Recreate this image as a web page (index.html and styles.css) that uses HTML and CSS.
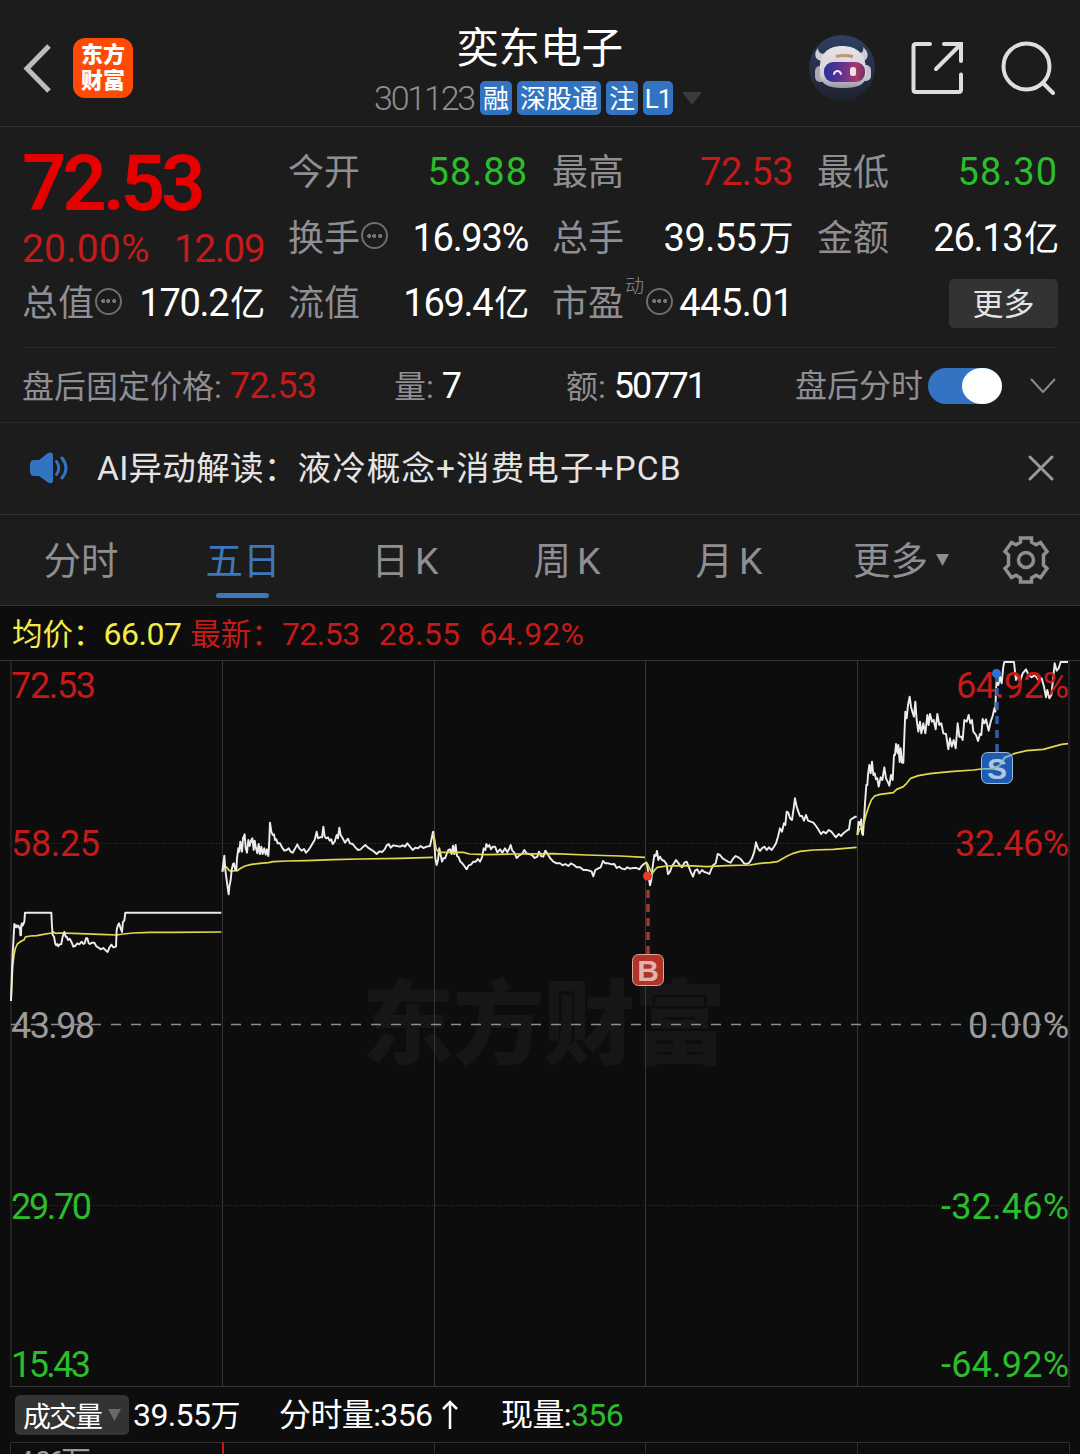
FILE: index.html
```html
<!DOCTYPE html>
<html lang="zh-CN">

<head>
	<meta charset="UTF-8">
	<meta name="viewport" content="width=device-width, initial-scale=1.0">
	<title>奕东电子 301123</title>
	<link rel="stylesheet" href="styles.css">
</head>

<body>
	<header class="topbar">
		<div class="left">
			<svg class="icon-back" width="32" height="50" viewBox="0 0 32 50">
				<path d="M28 3L6 25.5L28 48" />
			</svg>
			<div class="logo"><span>东方</span><span>财富</span></div>
		</div>
		<div class="title">
			<h1>奕东电子</h1>
			<div class="code">
				<span class="number">301123</span>
				<span class="tag">融</span>
				<span class="tag tag-wide">深股通</span>
				<span class="tag">注</span>
				<span class="tag tag-l1">L1</span>
				<svg width="20" height="13" viewBox="0 0 20 13"><path d="M0 0H20L10 13Z" fill="#3b3b3b" /></svg>
			</div>
		</div>
		<div class="actions">
			<svg width="66" height="66" viewBox="0 0 66 66">
				<defs>
					<linearGradient id="sky" x1="0" y1="0" x2="0" y2="1">
						<stop offset="0" stop-color="#303f61" />
						<stop offset="1" stop-color="#1d222e" />
					</linearGradient>
					<linearGradient id="visor" x1="0" y1="0" x2="1" y2="0">
						<stop offset="0" stop-color="#2a2f9a" />
						<stop offset=".45" stop-color="#63338f" />
						<stop offset=".8" stop-color="#a93a68" />
						<stop offset="1" stop-color="#6a2f6d" />
					</linearGradient>
					<linearGradient id="shell" x1="0" y1="0" x2="0" y2="1">
						<stop offset="0" stop-color="#e6e4e9" />
						<stop offset=".7" stop-color="#d3d0d8" />
						<stop offset="1" stop-color="#9996a3" />
					</linearGradient>
				</defs>
				<circle cx="33" cy="33" r="33" fill="url(#sky)" />
				<path d="M9 13C4 19 6 26 14 26L17 18C12 20 9 17 9 13Z" fill="#cfcdd4" />
				<path d="M54 12C61 18 60 25 52 27L48 18C53 19 55 16 54 12Z" fill="#cfcdd4" />
				<rect x="6" y="31" width="11" height="16" rx="5" fill="#aaa8b1" />
				<rect x="50" y="30" width="12" height="16" rx="5" fill="#c4c2ca" />
				<path d="M11 35C10 19 19 11 33 11C48 11 57 19 57 35C59 48 52 53 34 53C17 53 10 48 11 35Z" fill="url(#shell)" />
				<path d="M27 21.500Q35 19.500 44 21.500" stroke="#bd9673" stroke-width="3" fill="none" />
				<rect x="15" y="27" width="41" height="20" rx="9" fill="url(#visor)" />
				<path d="M25 39Q26 36 28.500 36Q31 36 32 39" stroke="#eceaff" stroke-width="2" fill="none" stroke-linecap="round" />
				<rect x="41" y="32" width="6" height="9" rx="2.500" fill="#f3dfec" />
			</svg>
			<svg class="icon-line" width="54" height="54" viewBox="0 0 54 54">
				<path d="M19 3H5Q2.500 3 2.500 5.500V48.500Q2.500 51 5 51H47.500Q50 51 50 48.500V33.500M33 3H50V20M49 4L25 28" />
			</svg>
			<svg class="icon-line" width="54" height="54" viewBox="0 0 54 54">
				<circle cx="25.500" cy="25.500" r="23" />
				<path d="M42 42L52 52" />
			</svg>
		</div>
	</header>

	<section class="quote">
		<div class="price">
			<div class="last">72.53</div>
			<div class="change"><span>20.00%</span><span class="tight">12.09</span></div>
		</div>
		<div class="cell"><label>今开</label><b class="green">58.88</b></div>
		<div class="cell"><label>最高</label><b class="red">72.53</b></div>
		<div class="cell"><label>最低</label><b class="green">58.30</b></div>
		<div class="cell"><label>换手</label><i class="more-dot"></i><b class="tight">16.93%</b></div>
		<div class="cell"><label>总手</label><b>39.55<em>万</em></b></div>
		<div class="cell"><label>金额</label><b class="tight">26.13<em>亿</em></b></div>
		<div class="cell"><label>总值</label><i class="more-dot"></i><b class="tight">170.2<em>亿</em></b></div>
		<div class="cell"><label>流值</label><b class="tight">169.4<em>亿</em></b></div>
		<div class="cell"><label>市盈<sup>动</sup></label><i class="more-dot"></i><b>445.01</b></div>
		<div class="cell"><button class="btn-more">更多</button></div>
	</section>

	<section class="after-hours">
		<div>盘后固定价格: <b class="red">72.53</b></div>
		<div>量: <b>7</b></div>
		<div>额: <b class="tight">50771</b></div>
		<div class="switch-group">
			<span>盘后分时</span>
			<span class="switch"></span>
			<svg width="26" height="16" viewBox="0 0 26 16"><path d="M1 1L13 14L25 1" fill="none" stroke="#8a8a8a" stroke-width="2" /></svg>
		</div>
	</section>

	<section class="news">
		<svg width="40" height="32" viewBox="0 0 40 32">
			<path d="M5 8H10L19 1Q24 -1 24 4V28Q24 33 19 30.500L10 24H5Q1 24 1 19V13Q1 8 5 8Z" fill="#3274c1" />
			<path d="M27.500 9.500Q32 16 27.500 22.500M33 6Q41 16 33 26" fill="none" stroke="#3274c1" stroke-width="3" stroke-linecap="round" />
		</svg>
		<p>AI异动解读：<span>液冷概念+消费电子+PCB</span></p>
		<svg width="26" height="26" viewBox="0 0 26 26"><path d="M2 2L24 24M24 2L2 24" stroke="#9a9a9a" stroke-width="3" stroke-linecap="round" /></svg>
	</section>

	<nav class="tabs">
		<a>分时</a>
		<a class="active">五日</a>
		<a>日<span>K</span></a>
		<a>周<span>K</span></a>
		<a>月<span>K</span></a>
		<a class="tab-more">更多<svg width="13" height="12" viewBox="0 0 13 12"><path d="M0 0H13L6.500 12Z" fill="#8e8e93" /></svg></a>
		<svg class="icon-gear" width="48" height="48" viewBox="0 0 48 48">
			<path d="M18.500 2H29.500V6L34 8.700L38.500 6.500L45 15.500L41.500 19V29L45 32.500L38.500 41.500L34 39.300L29.500 42V46H18.500V42L14 39.300L9.500 41.500L3 32.500L6.500 29V19L3 15.500L9.500 6.500L14 8.700L18.500 6Z" />
			<circle cx="24" cy="24" r="7.500" />
		</svg>
	</nav>

	<section class="legend">
		<span class="avg">均价：<b>66.07</b></span>
		<span class="latest">最新：<b>72.53</b><b>28.55</b><b>64.92%</b></span>
	</section>

	<svg class="chart" width="1080" height="728" viewBox="0 660 1080 728">
		<text class="watermark" x="362" y="1057" textLength="364">东方财富</text>

		<g class="grid">
			<path d="M0 660.500H1080M10 1386.500H1070M11 661V1386M222.500 661V1386M434.500 661V1386M645.500 661V1386M857.500 661V1386M1069 661V1386" />
			<path class="dotted" d="M12 843.500H1069M12 1205.500H1069" />
		</g>

		<!-- day 1, day 2 -->
		<g class="series" transform="translate(0 780) scale(.33333)">
			<polyline class="avg-line" points="33,663 36,600 38,560 42,525 46,505 52,492 60,486 66,482 72,480 76,471 90,468 110,467 130,463 155,459 160,456 166,460 180,459 220,460 300,463 350,465 370,462 400,459 450,457 520,457 664,456" />
			<polyline points="33,663 36,570 38,520 41,470 43,432 46,436 48,442 50,436 53,440 55,437 58,445 60,442 61,466 63,466 64,435 66,430 68,437 71,430 73,425 75,398 154,398 156,440 158,465 162,470 166,492 169,496 172,492 175,499 178,494 184,492 188,470 193,456 197,470 200,470 204,480 209,476 214,485 220,500 225,498 232,490 238,493 245,485 250,492 254,490 258,475 262,475 266,490 270,492 276,488 283,488 290,500 296,503 302,508 310,504 318,512 323,516 328,503 334,494 340,502 348,500 350,450 353,438 357,430 362,445 366,456 369,425 373,422 376,398 664,398" />
			<polyline class="avg-line" points="667,275 673,258 680,262 688,272 700,273 712,272 722,265 735,258 755,253 780,250 805,248 820,245 860,243 920,242 1000,239 1080,237 1200,235 1299,232" />
			<polyline points="667,275 670,250 673,227 676,270 680,300 684,330 686,343 688,320 692,300 695,270 699,252 702,250 706,270 709,270 711,235 715,205 718,215 721,185 724,200 726,215 729,175 734,163 737,205 741,218 745,180 749,198 753,182 757,175 761,210 764,182 768,205 772,220 776,192 780,222 784,200 788,222 793,205 797,224 801,208 805,228 807,200 810,128 814,155 818,165 822,163 825,180 829,178 833,190 840,190 846,202 853,212 860,210 866,205 872,215 878,218 884,208 892,193 898,205 905,212 912,207 918,218 924,212 932,200 938,190 944,180 950,155 954,175 960,172 966,172 970,140 974,170 979,175 984,172 989,182 994,178 998,192 1004,185 1010,165 1014,175 1018,143 1022,165 1028,175 1035,188 1044,176 1050,190 1058,192 1066,202 1074,210 1082,208 1090,200 1096,195 1104,203 1112,208 1120,213 1130,222 1138,214 1146,216 1154,208 1160,196 1166,192 1172,203 1180,196 1190,198 1200,200 1208,196 1215,200 1222,190 1230,200 1238,210 1246,203 1254,205 1262,198 1270,204 1280,200 1290,198 1294,180 1299,155" />
		</g>

		<!-- day 3, day 4 -->
		<g class="series" transform="translate(420 780) scale(.33333)">
			<polyline points="38,175 40,155 43,190 46,235 50,255 54,240 58,205 62,225 66,245 70,235 75,235 80,222 85,210 90,208 95,222 99,197 103,222 107,195 111,228 116,232 121,245 127,250 133,258 140,268 146,256 153,254 160,245 167,245 174,237 180,245 186,232 191,205 196,210 199,192 204,200 208,195 213,208 218,200 225,200 232,217 240,208 247,218 255,205 262,217 267,208 272,195 277,212 283,218 290,234 298,226 306,222 313,210 320,220 328,222 336,225 344,234 352,230 357,215 363,228 370,230 376,212 383,222 390,234 400,245 410,250 420,250 428,256 436,252 445,258 453,250 462,255 470,262 480,262 490,270 500,270 508,272 515,275 520,289 526,270 535,265 542,262 549,243 556,250 565,250 575,253 583,252 590,264 598,260 606,266 615,268 622,262 630,266 640,264 650,264 658,268 665,258 672,252 678,248" />
			<polyline class="avg-line" points="40,160 44,180 48,205 52,212 58,217 80,217 130,217 148,222 200,224 280,222 400,221 500,225 600,228 675,232" />
			<polyline points="680,248 683,265 686,290 690,316 694,300 698,260 703,225 707,228 711,213 715,240 720,230 726,240 733,243 740,253 744,282 750,275 756,258 762,250 768,240 774,248 780,256 786,262 793,248 800,245 806,260 812,275 819,290 825,272 832,268 838,280 846,270 853,276 860,278 868,282 875,265 880,255 887,250 893,222 900,225 908,235 916,240 924,245 932,248 940,235 947,228 955,232 963,238 972,250 980,252 988,248 996,235 1003,215 1008,187 1014,205 1020,213 1026,205 1033,200 1040,210 1047,202 1055,210 1062,200 1068,190 1074,170 1080,145 1086,155 1092,130 1096,135 1100,95 1105,98 1110,115 1116,120 1121,85 1125,55 1130,80 1135,95 1140,108 1146,108 1152,122 1158,105 1164,122 1172,125 1180,128 1188,138 1196,150 1203,162 1210,155 1218,160 1226,150 1234,155 1242,165 1248,172 1256,162 1263,168 1272,158 1280,152 1287,148 1291,120 1298,115 1306,110 1310,110" />
			<polyline class="avg-line" points="678,245 684,255 690,268 697,280 704,270 712,262 740,258 800,257 860,260 920,257 990,255 1020,250 1050,248 1072,245 1086,237 1102,228 1120,220 1140,214 1180,210 1240,208 1310,202" />
		</g>

		<!-- day 5 -->
		<g class="series" transform="translate(840 640) scale(.33333)">
			<polyline points="52,585 56,545 60,555 64,538 66,580 69,585 72,540 75,490 79,435 82,435 84,405 88,375 92,400 96,365 100,405 104,400 108,418 112,415 116,440 122,412 127,420 133,382 138,415 143,425 148,437 153,405 158,420 162,345 165,345 168,312 173,340 175,315 179,366 182,325 186,368 190,368 193,290 196,215 200,235 204,195 209,170 213,200 217,215 222,230 226,185 230,240 235,275 240,245 244,280 250,250 256,280 262,225 266,255 270,222 276,245 281,240 287,268 292,222 298,255 304,250 310,280 318,282 325,328 330,295 335,320 341,300 347,325 353,250 358,290 364,290 368,300 373,240 380,245 386,225 391,250 396,240 400,275 408,285 414,303 420,282 424,285 428,237 433,250 438,238 446,272 452,245 458,228 463,205 466,215 468,150 471,110 475,135 480,110 485,130 490,80 493,66 522,66 524,85 528,120 533,108 540,125 548,100 558,88 566,105 575,112 585,105 595,120 605,115 612,140 618,172 622,150 628,175 634,165 640,110 644,70 650,92 656,85 662,66 684,66" />
		</g>

		<g class="axis">
			<text class="up" x="11" y="698" textLength="85">72.53</text>
			<text class="up" x="11" y="856" textLength="89">58.25</text>
			<text class="flat" x="11" y="1038" textLength="84">43.98</text>
			<text class="down" x="11" y="1219" textLength="81">29.70</text>
			<text class="down" x="11" y="1377" textLength="80">15.43</text>
			<text class="up" x="956" y="698" textLength="113">64.92%</text>
			<text class="up" x="955" y="856" textLength="114">32.46%</text>
			<text class="flat" x="968" y="1038" textLength="101">0.00%</text>
			<text class="down" x="941" y="1219" textLength="128">-32.46%</text>
			<text class="down" x="941" y="1377" textLength="128">-64.92%</text>
		</g>
		<path class="zero" d="M11 1024.500H1069" />

		<g class="marker buy">
			<path d="M648 890V954" />
			<circle cx="647.500" cy="876" r="4.500" />
			<rect x="632.500" y="954.500" width="31" height="31" rx="6" />
			<text x="648" y="981">B</text>
		</g>
		<g class="marker sell">
			<path d="M997 674V752" />
			<circle cx="996.500" cy="673.500" r="4.500" />
			<rect x="981.500" y="752.500" width="31" height="31" rx="6" />
			<text x="997" y="779">S</text>
		</g>
		<g class="series" transform="translate(840 640) scale(.33333)">
			<polyline class="avg-line" points="52,585 58,570 64,560 72,550 78,525 86,500 94,480 104,468 120,463 160,458 170,448 190,440 200,430 212,415 235,407 270,401 330,395 400,390 424,387" />
			<polyline class="avg-line under-badge" points="424,387 460,386 480,375 495,352 510,347 518,343" />
			<polyline class="avg-line" points="518,343 525,340 560,332 610,328 640,320 665,313 684,311" />
		</g>
	</svg>

	<section class="volume-bar">
		<button class="indicator">成交量<svg width="13" height="12" viewBox="0 0 13 12"><path d="M0 0H13L6.500 12Z" fill="#6a6a6a" /></svg></button>
		<span class="total">39.55<em>万</em></span>
		<span class="minute">分时量:356<svg width="18" height="30" viewBox="0 0 18 30"><path d="M9 29V2M2 9L9 2L16 9" fill="none" stroke="#fff" stroke-width="2.500" /></svg></span>
		<span class="current">现量:<b class="green">356</b></span>
	</section>

	<svg class="volume-chart" width="1080" height="12" viewBox="0 0 1080 12">
		<path class="frame" d="M10.500 12V.5H1069.500V12M434.500 0V12M645.500 0V12M857.500 0V12" />
		<path class="bar" d="M223 0V12" />
		<text x="17" y="30" textLength="74">4.06万</text>
	</svg>
</body>

</html>
```
FILE: styles.css
```css
* {
	margin: 0;
	padding: 0;
	box-sizing: border-box;
}

body {
	width: 1080px;
	height: 1454px;
	overflow: hidden;
	background-color: #0d0d0d;
	color: #fff;
	font-family: Roboto, "Noto Sans CJK SC", sans-serif;
	line-height: 1;
}

svg {
	display: block;
	flex: none;
}

b,
i,
em {
	font-weight: 400;
	font-style: normal;
}

button {
	border: 0;
	font-family: inherit;
}

.red {
	color: #c41a1a;
}

.green {
	color: #2bbd2b;
}

/* header */

.topbar {
	display: grid;
	grid-template-columns: 270px 1fr 270px;
	height: 127px;
	background-color: #1c1c1c;
	border-bottom: 1px solid #343434;
}

.topbar .left {
	display: flex;
	align-items: center;
	gap: 18px;
	padding: 9px 0 0 21px;
}

.icon-back path {
	fill: none;
	stroke: #bdbdbd;
	stroke-width: 5;
}

.logo {
	display: flex;
	flex-direction: column;
	justify-content: center;
	width: 60px;
	height: 60px;
	margin-left: 2px;
	border-radius: 12px;
	background-color: #ff4a05;
	font-size: 22px;
	font-weight: 900;
	line-height: 26px;
	text-align: center;
}

.title {
	padding-top: 24px;
}

.title h1 {
	font-size: 41.5px;
	font-weight: 400;
	line-height: 50px;
	text-align: center;
}

.code {
	display: flex;
	align-items: center;
	gap: 5px;
	margin-top: 7px;
	padding-left: 104px;
	height: 34px;
}

.code .number {
	width: 101px;
	color: #8e8e93;
	font-size: 34px;
	font-weight: 300;
	letter-spacing: -2.2px;
}

.code svg {
	margin-left: 4px;
}

.tag {
	width: 32px;
	height: 34px;
	border-radius: 5px;
	background-color: #3274c1;
	font-size: 26px;
	line-height: 36px;
	text-align: center;
	white-space: nowrap;
}

.tag-wide {
	width: 84px;
}

.tag-l1 {
	width: 30px;
	letter-spacing: -1px;
}

.actions {
	display: flex;
	align-items: center;
	gap: 36px;
	padding-top: 9px;
}

.actions svg:first-child {
	margin-left: -1px;
}

.icon-line {
	fill: none;
	stroke: #dedede;
	stroke-width: 4;
	stroke-linecap: round;
}

/* quote numbers */

.quote {
	display: grid;
	grid-template-columns: 242px 240px 241px 241px;
	grid-template-rows: 66px 65px 66px;
	column-gap: 24px;
	height: 221px;
	padding: 12px 22px;
	background-color: #1c1c1c;
}

.price {
	grid-row: span 2;
}

.price .last {
	height: 85px;
	color: #e60000;
	font-size: 78px;
	font-weight: 600;
	line-height: 90px;
	letter-spacing: -4.2px;
}

.price .change {
	display: flex;
	justify-content: space-between;
	color: #c41a1a;
	font-size: 39px;
	line-height: 50px;
	letter-spacing: .2px;
}

.price .tight {
	letter-spacing: -1.6px;
}

.cell {
	display: flex;
	align-items: center;
	white-space: nowrap;
}

.cell label {
	position: relative;
	top: 1px;
	color: #8e8e93;
	font-size: 36px;
}

.cell sup {
	position: absolute;
	left: 73px;
	top: -9px;
	font-size: 19px;
	font-weight: 300;
}

.cell b {
	margin-left: auto;
	font-size: 38px;
	letter-spacing: -.5px;
}

.cell .green {
	letter-spacing: 1px;
}

.cell .tight {
	letter-spacing: -1.3px;
}

.cell b em {
	margin-left: 2px;
	font-size: 35px;
}

.more-dot {
	width: 27px;
	height: 27px;
	margin: -4px 0 0 1px;
	border: 2px solid #6e6e70;
	border-radius: 50%;
	background: radial-gradient(circle, #77777a 1.8px, transparent 2.2px) center / 6.5px 6px content-box no-repeat,
		radial-gradient(circle, #77777a 1.8px, transparent 2.2px) 3px center / 6.5px 6px no-repeat,
		radial-gradient(circle, #77777a 1.8px, transparent 2.2px) 14px center / 6.5px 6px no-repeat;
}

.cell label:has(sup) + .more-dot {
	margin-left: 22px;
}

.btn-more {
	width: 109px;
	height: 49px;
	margin-left: auto;
	padding-bottom: 4px;
	border-radius: 5px;
	background-color: #333;
	color: #e4e4e4;
	font-size: 31px;
}

/* after hours */

.after-hours {
	position: relative;
	display: grid;
	grid-template-columns: 372px 172px 229px 1fr;
	align-items: center;
	height: 75px;
	padding: 2px 22px 0;
	background-color: #1c1c1c;
	border-bottom: 1px solid #292929;
	color: #8e8e93;
	font-size: 32px;
	white-space: nowrap;
}

.after-hours::before {
	content: "";
	position: absolute;
	top: -1px;
	left: 22px;
	right: 22px;
	height: 1px;
	background-color: #292929;
}

.after-hours b {
	font-size: 36px;
	letter-spacing: -.8px;
}

.after-hours .tight {
	letter-spacing: -2px;
}

.after-hours b:not(.red) {
	color: #fff;
}

.switch-group {
	display: flex;
	align-items: center;
}

.switch-group svg {
	margin-left: 28px;
}

.switch {
	display: flex;
	justify-content: flex-end;
	width: 74px;
	height: 36px;
	margin-left: 5px;
	border-radius: 18px;
	background-color: #3274c1;
}

.switch::after {
	content: "";
	width: 40px;
	height: 36px;
	border-radius: 50%;
	background-color: #fff;
}

/* news line */

.news {
	display: flex;
	align-items: center;
	height: 92px;
	padding: 0 26px 2px 29px;
	background-color: #1c1c1c;
	border-bottom: 1px solid #343434;
	color: #e4e4e4;
	font-size: 33.5px;
	letter-spacing: .3px;
}

.news p {
	flex: 1;
	margin-left: 28px;
	padding-top: 3px;
}

.news p span {
	letter-spacing: 1.1px;
}

/* period tabs */

.tabs {
	display: flex;
	align-items: center;
	height: 91px;
	background-color: #1c1c1c;
	border-bottom: 1px solid #343434;
	color: #8e8e93;
	font-size: 37.5px;
}

.tabs a {
	display: flex;
	flex: none;
	align-items: center;
	justify-content: center;
	width: 162px;
	height: 90px;
	padding-top: 3px;
}

.tabs a span {
	margin-left: 6px;
	font-weight: 400;
}

.tabs .active {
	position: relative;
	color: #3d78bd;
}

.tabs .active::after {
	content: "";
	position: absolute;
	left: 54px;
	bottom: 7px;
	width: 53px;
	height: 5px;
	border-radius: 3px;
	background-color: #3d78bd;
}

.tabs .tab-more {
	width: 182px;
}

.tab-more svg {
	margin: -3px 0 0 8px;
}

.icon-gear {
	margin-left: 10px;
	fill: none;
	stroke: #8e8e93;
	stroke-width: 3.5;
}

/* chart */

.legend {
	display: flex;
	align-items: center;
	gap: 9px;
	height: 54px;
	padding: 2px 0 0 12px;
	font-size: 30.5px;
}

.legend b {
	font-size: 32px;
	letter-spacing: -.5px;
}

.legend .avg {
	color: #f5ea4a;
}

.legend .latest {
	color: #c41a1a;
}

.latest b + b {
	margin-left: 19px;
	letter-spacing: .2px;
}

.chart .watermark {
	fill: #161616;
	font-size: 92px;
	font-weight: 900;
}

.grid path {
	fill: none;
	stroke: #363636;
}

.grid .dotted {
	stroke-dasharray: 1 2;
}

.chart .zero {
	stroke: #8d8d8d;
	stroke-width: 1.3;
	stroke-dasharray: 10 10;
}

.series polyline {
	fill: none;
	stroke: #ececec;
	stroke-width: 5.8;
	stroke-linejoin: round;
}

.series .avg-line {
	stroke: #e0d84e;
	stroke-width: 5.2;
}

.series .under-badge {
	stroke: #8cc0b4;
}

.axis text {
	font-size: 36px;
}

.axis .up {
	fill: #c41a1a;
}

.axis .flat {
	fill: #9b9b9b;
}

.axis .down {
	fill: #2bbd2b;
}

.marker text {
	font: 700 30px "Liberation Sans", sans-serif;
	text-anchor: middle;
}

.marker path {
	stroke-width: 3.5;
	stroke-dasharray: 8 6;
}

.buy path {
	stroke: #a03a30;
}

.buy circle {
	fill: #ec3b24;
}

.buy rect {
	fill: #b03427;
	stroke: #dba8a3;
}

.buy text {
	fill: #dfb3ae;
}

.sell path {
	stroke: #2960b0;
}

.sell circle {
	fill: #2c72d8;
}

.sell rect {
	fill: #1e5cb4;
	stroke: #9fb8dc;
}

.sell text {
	fill: #b0c5e2;
}

/* volume */

.volume-bar {
	display: flex;
	align-items: center;
	height: 54px;
	padding-left: 15px;
	font-size: 32px;
	letter-spacing: -.6px;
	white-space: nowrap;
}

.indicator {
	display: flex;
	align-items: center;
	gap: 7px;
	width: 114px;
	height: 40px;
	padding-left: 8px;
	border-radius: 5px;
	background-color: #333;
	color: #fff;
	font-size: 28px;
	letter-spacing: -2px;
}

.volume-bar .total {
	width: 146px;
	margin-left: 4px;
}

.total em {
	font-size: 30px;
}

.volume-bar .minute {
	display: flex;
	align-items: center;
	width: 222px;
}

.minute svg {
	margin-left: 8px;
}

.volume-chart .frame {
	fill: none;
	stroke: #303030;
}

.volume-chart .bar {
	stroke: #c41a1a;
	stroke-width: 2;
}

.volume-chart text {
	fill: #9b9b9b;
	font-size: 30px;
}
```
